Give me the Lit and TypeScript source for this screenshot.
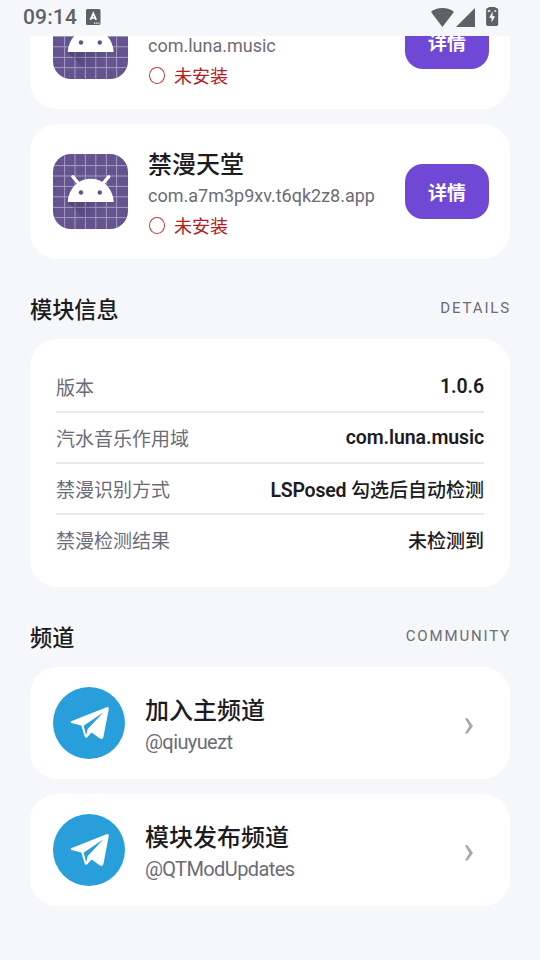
import { LitElement, html, css, svg } from "lit";
import { customElement, property } from "lit/decorators.js";

const GRID = [11.6, 22, 32.4, 42.8, 53.4, 63.6];

@customElement("status-bar")
class StatusBar extends LitElement {
  static styles = css`
    :host { display: flex; align-items: center; height: 36px; box-sizing: border-box; padding: 0 40px 2px 23px; color: #606163; flex: none; }
    .time { font-size: 21px; line-height: 34px; letter-spacing: 0.15px; font-weight: 500; }
    .badge { margin-left: 9px; }
    .icons { margin-left: auto; display: flex; align-items: center; }
    svg { display: block; }
  `;
  render() {
    return html`
      <span class="time">09:14</span>
      <svg class="badge" width="15" height="16" viewBox="0 0 15 16">
        <rect width="14.5" height="16" rx="1.5" fill="#5f6062" />
        <path d="M4.4 10.9L7.3 4.3L10.2 10.9M5.4 8.9H9.2" fill="none" stroke="#fff" stroke-width="1.7" />
        <path d="M8 13.4h1.3v1.3H8zM10.2 13.4h1.3v1.3h-1.3zM12.4 13.4h1.1v1.3h-1.1z" fill="#fff" />
      </svg>
      <div class="icons">
        <svg width="69" height="20" viewBox="0 0 69 20" fill="#606163">
          <path d="M0 5C2.7 2.5 6.7 1 11.4 1s8.7 1.5 11.5 4L11.4 20Z" />
          <path d="M44 1V20H25Z" />
          <path d="M57.5 1V0H64.5V1H65.5a1.7 1.7 0 0 1 1.7 1.7V17.3a1.7 1.7 0 0 1-1.7 1.7H56.8A1.7 1.7 0 0 1 55.1 17.3V2.7a1.7 1.7 0 0 1 1.7-1.7Z" />
          <path d="M61.6 4.600L58.2 10.7H60.6V15.600L64 9.2H61.6Z" fill="#fff" />
          <path d="M56.8 3.2h2.5v1.5h-2.5zM63.4 3.2h1.8v1.5h-1.8z" fill="#fff" />
        </svg>
      </div>
    `;
  }
}

@customElement("app-card")
class AppCard extends LitElement {
  @property() name = "";
  @property() pkg = "";
  static styles = css`
    :host { display: flex; align-items: center; height: 135px; box-sizing: border-box; padding: 0 21px 0 23px; background: #fff; border-radius: 27px; }
    .icon { display: block; width: 75px; height: 75px; border-radius: 18px; flex: none; }
    .info { margin-left: 20px; flex: 1; min-width: 0; white-space: nowrap; padding-top: 8px; }
    .name { font-size: 24px; font-weight: 500; line-height: 34px; color: #1c1b22; margin-top: -1px; }
    .pkg { font-size: 18px; line-height: 28px; color: #6d6b78; }
    .state { display: flex; align-items: center; font-size: 18px; line-height: 33px; color: #b3201f; }
    .ring { width: 14px; height: 15.5px; border: 1px solid #c4393a; border-radius: 50%; margin: -1px 9px 0 1px; }
    .button { width: 84px; height: 55px; border-radius: 18px; background: #6f49d5; color: #fff; font-size: 19px; font-weight: 700; line-height: 60px; text-align: center; flex: none; }
  `;
  render() {
    return html`
      <svg class="icon" viewBox="0 0 75 75">
        <defs>
          <linearGradient id="shade" x1="20" y1="48" x2="52" y2="75" gradientUnits="userSpaceOnUse">
            <stop offset="0" stop-color="#2b2545" stop-opacity=".32" />
            <stop offset="0.7" stop-color="#2b2545" stop-opacity="0" />
          </linearGradient>
        </defs>
        <rect width="75" height="75" fill="#63548f" />
        ${GRID.map((p) => svg`<path d="M${p} 0V75M0 ${p}H75" stroke="#a59cc0" stroke-width="1" />`)}
        <path d="M14.7 48L42 75H75V62L60.7 47.7Z" fill="url(#shade)" />
        <path d="M14.7 48C15.5 35 25 24.8 37.7 24.8S60 35 60.7 48Z" fill="#fff" />
        <path d="M19.8 22.6L27 31M55.8 22.6L48.6 31" stroke="#fff" stroke-width="3.2" stroke-linecap="round" />
        <circle cx="28" cy="38.5" r="2.2" fill="#61528c" />
        <circle cx="46.8" cy="38.5" r="2.2" fill="#61528c" />
      </svg>
      <div class="info">
        <div class="name">${this.name}</div>
        <div class="pkg">${this.pkg}</div>
        <div class="state"><span class="ring"></span>未安装</div>
      </div>
      <div class="button">详情</div>
    `;
  }
}

@customElement("section-head")
class SectionHead extends LitElement {
  @property() label = "";
  @property() tag = "";
  static styles = css`
    :host { display: flex; align-items: center; justify-content: space-between; height: 80px; box-sizing: border-box; padding-top: 20px; }
    .label { font-size: 22.2px; font-weight: 500; line-height: 40px; color: #1c1b22; padding-top: 1px; }
    .tag { font-size: 15px; line-height: 20px; letter-spacing: 1.85px; color: #6d6b78; margin: -3px -1px 0 0; }
  `;
  render() {
    return html`<span class="label">${this.label}</span><span class="tag">${this.tag}</span>`;
  }
}

@customElement("info-card")
class InfoCard extends LitElement {
  static styles = css`
    :host { display: block; background: #fff; border-radius: 27px; padding: 23px 26px; }
    .row { display: flex; justify-content: space-between; height: 49px; line-height: 53px; font-size: 19px; white-space: nowrap; }
    .row + .row { border-top: 2px solid #e9e8ee; }
    .key { color: #6d6b78; }
    .value { color: #1c1b22; font-weight: 500; }
    .latin { font-size: 19.5px; font-weight: 600; letter-spacing: -0.1px; line-height: 49px; }
    .word { font-size: 19.5px; font-weight: 600; letter-spacing: -0.2px; }
  `;
  render() {
    return html`
      <div class="row"><span class="key">版本</span><span class="value latin">1.0.6</span></div>
      <div class="row"><span class="key">汽水音乐作用域</span><span class="value latin">com.luna.music</span></div>
      <div class="row"><span class="key">禁漫识别方式</span><span class="value"><span class="word">LSPosed </span>勾选后自动检测</span></div>
      <div class="row"><span class="key">禁漫检测结果</span><span class="value">未检测到</span></div>
    `;
  }
}

@customElement("channel-card")
class ChannelCard extends LitElement {
  @property() name = "";
  @property() handle = "";
  static styles = css`
    :host { display: flex; align-items: center; height: 112px; box-sizing: border-box; padding: 0 36px 0 23px; background: #fff; border-radius: 27px; }
    .logo { display: block; flex: none; }
    .info { margin-left: 20px; flex: 1; white-space: nowrap; padding-top: 5px; }
    .name { font-size: 24px; font-weight: 500; line-height: 34px; color: #1c1b22; }
    .handle { font-size: 20px; line-height: 29px; letter-spacing: -0.6px; color: #6d6b78; }
    .arrow { display: block; margin-top: 5px; }
  `;
  render() {
    return html`
      <svg class="logo" width="72" height="72" viewBox="0 0 72 72">
        <circle cx="36" cy="36" r="36" fill="#289fdb" />
        <path d="M18.2 34.2L53.5 20.2Q56 19.3 55.8 22L50.4 50Q49.6 53 47 51.6L38.6 45.6L34.2 50.2Q32.4 51.8 31.7 49.4L28.3 38.6L18.4 35.9Q17.2 35 18.2 34.2Z" fill="#fff" />
        <path d="M30.6 38.8L50.5 25.2L34.7 42.1L33.2 48.3Z" fill="#289fdb" />
      </svg>
      <div class="info">
        <div class="name">${this.name}</div>
        <div class="handle">${this.handle}</div>
      </div>
      <svg class="arrow" width="10" height="16" viewBox="0 0 10 16">
        <path d="M0.8 0.3H3.6L9 7.9L3.6 15.5H0.8L5.3 7.9Z" fill="#aaa8b3" />
      </svg>
    `;
  }
}

@customElement("app-root")
class AppRoot extends LitElement {
  static styles = css`
    :host { display: flex; flex-direction: column; height: 960px; overflow: hidden; background: #f5f7fb; font-family: Roboto, "Noto Sans CJK SC", sans-serif; }
    .view { flex: 1; min-height: 0; overflow: hidden; display: flex; flex-direction: column; justify-content: flex-end; padding: 0 30px 54px; }
    .view > * { flex: none; }
    .stack { display: flex; flex-direction: column; gap: 15px; }
  `;
  render() {
    return html`
      <status-bar></status-bar>
      <div class="view">
        <div class="stack">
          <app-card name="汽水音乐" pkg="com.luna.music"></app-card>
          <app-card name="禁漫天堂" pkg="com.a7m3p9xv.t6qk2z8.app"></app-card>
        </div>
        <section-head label="模块信息" tag="DETAILS"></section-head>
        <info-card></info-card>
        <section-head label="频道" tag="COMMUNITY"></section-head>
        <div class="stack">
          <channel-card name="加入主频道" handle="@qiuyuezt"></channel-card>
          <channel-card name="模块发布频道" handle="@QTModUpdates"></channel-card>
        </div>
      </div>
    `;
  }
}
